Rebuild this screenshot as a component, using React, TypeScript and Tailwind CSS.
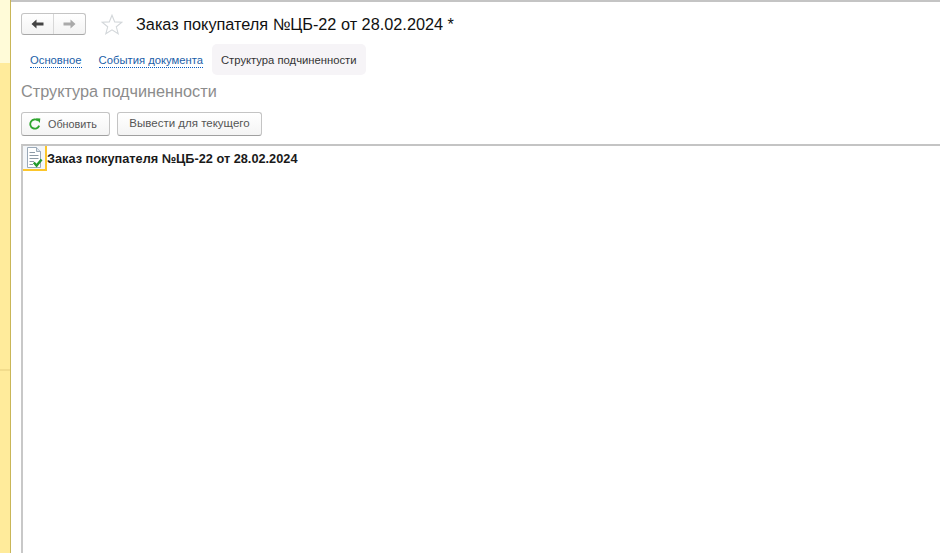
export default function App() {
  return (
    <div className="flex h-[553px] w-[940px] overflow-hidden bg-white font-['Liberation_Sans',Arial,sans-serif]">
      {/* section panel edge */}
      <div className="flex w-[11px] shrink-0 flex-col border-r border-[#c9b658]">
        <div className="h-[63px] bg-[#fffbd8]" />
        <div className="h-[306px] bg-[#ffeb9b]" />
        <div className="h-[2px] bg-[#f2dc8c]" />
        <div className="flex-1 bg-[#ffeb9b]" />
      </div>

      <div className="flex min-w-0 flex-1 flex-col">
        <div className="h-[2px] bg-[#c4c4c4]" />

        {/* header */}
        <div className="mt-[10px] flex h-[24px] items-center pl-[10px]">
          <div className="flex h-[22px] w-[65px] rounded-[3px] border border-[#c4c4c4] border-b-[#a8a8a8] bg-gradient-to-b from-white to-[#f3f3f3]">
            <div className="flex w-[32px] items-center justify-center border-r border-[#d8d8d8]">
              <svg width="13" height="10" viewBox="0 0 13 10">
                <path d="M0.5 5 L5.5 0.5 V3.5 H12.5 V6.5 H5.5 V9.5 Z" fill="#444" />
              </svg>
            </div>
            <div className="flex flex-1 items-center justify-center">
              <svg width="13" height="10" viewBox="0 0 13 10">
                <path d="M12.5 5 L7.5 0.5 V3.5 H0.5 V6.5 H7.5 V9.5 Z" fill="#aaa" />
              </svg>
            </div>
          </div>
          <svg className="ml-[15px]" width="22" height="21" viewBox="0 0 22 21">
            <path
              d="M11 1.2 L13.7 7.9 L20.9 8.3 L15.3 12.8 L17.2 19.8 L11 15.9 L4.8 19.8 L6.7 12.8 L1.1 8.3 L8.3 7.9 Z"
              fill="#fff"
              stroke="#d3d7da"
              strokeWidth="1.1"
            />
          </svg>
          <h1 className="ml-[13px] whitespace-nowrap text-[16.3px] leading-[24px] text-[#111]">
            Заказ покупателя №ЦБ-22 от 28.02.2024 *
          </h1>
        </div>

        {/* tabs */}
        <div className="mt-[8px] flex h-[31px] items-center pl-[19px] text-[11.25px]">
          <span className="mt-[2px] border-b border-dotted border-[#0a5cc0] leading-[13px] text-[#1a5ea8]">
            Основное
          </span>
          <span className="ml-[17px] mt-[2px] border-b border-dotted border-[#0a5cc0] leading-[13px] text-[#1a5ea8]">
            События документа
          </span>
          <span className="ml-[9px] flex h-[31px] items-center rounded-[5px] bg-[#f6f4f7] px-[9px] pt-[2px] text-[#333]">
            Структура подчиненности
          </span>
        </div>

        <h2 className="mt-[6px] pl-[10px] text-[16.25px] leading-[20px] text-[#8c8c8c]">Структура подчиненности</h2>

        {/* toolbar */}
        <div className="mt-[11px] flex gap-[7px] pl-[10px] text-[#555]">
          <button className="flex h-[24px] w-[89px] items-center rounded-[3px] border border-[#c4c4c4] border-b-[#a0a0a0] bg-gradient-to-b from-white to-[#f4f4f4] pl-[7px] text-[10.8px]">
            <svg width="12" height="12" viewBox="0 0 12 12" fill="none">
              <path d="M10.2 7.6 A4.6 4.6 0 1 1 8.9 2.6" stroke="#2fa52f" strokeWidth="1.8" />
              <path d="M7 0.3 L11.3 0.6 L10.8 4.9 Z" fill="#2fa52f" />
            </svg>
            <span className="ml-[7px]">Обновить</span>
          </button>
          <button className="flex h-[24px] w-[145px] items-center justify-center rounded-[3px] border border-[#c4c4c4] border-b-[#a0a0a0] bg-gradient-to-b from-white to-[#f4f4f4] text-[11.5px]">
            Вывести для текущего
          </button>
        </div>

        {/* subordination tree */}
        <div className="ml-[10px] mt-[8px] flex-1 border-l-2 border-t-2 border-[#c8c8c8] border-t-[#c4c4c4]">
          <div className="flex items-start">
            <div className="flex h-[25px] w-[24px] items-center justify-center border-b-2 border-r-2 border-[#fcc62b] bg-[#f3f6f9]">
              <svg width="17" height="22" viewBox="0 0 17 22">
                <path d="M1.5 0.5 H10.5 L14.5 4.5 V20.5 H1.5 Z" fill="#fff" stroke="#9aa9b8" />
                <path d="M10.5 0.5 V4.5 H14.5" fill="#dfe6ec" stroke="#9aa9b8" />
                <path
                  d="M3.5 5.5 H9 M3.5 8.5 H12.5 M3.5 11.5 H12.5 M3.5 14.5 H8 M3.5 17.5 H7"
                  stroke="#8d9aa6"
                  strokeWidth="1"
                />
                <path d="M7.8 15.5 L10.6 18.6 L15.6 12.6" fill="none" stroke="#239a2d" strokeWidth="2.4" />
              </svg>
            </div>
            <span className="mt-[5px] whitespace-nowrap text-[12.75px] font-bold leading-[16px] text-[#1a1a1a]">
              Заказ покупателя №ЦБ-22 от 28.02.2024
            </span>
          </div>
        </div>
      </div>
    </div>
  );
}
